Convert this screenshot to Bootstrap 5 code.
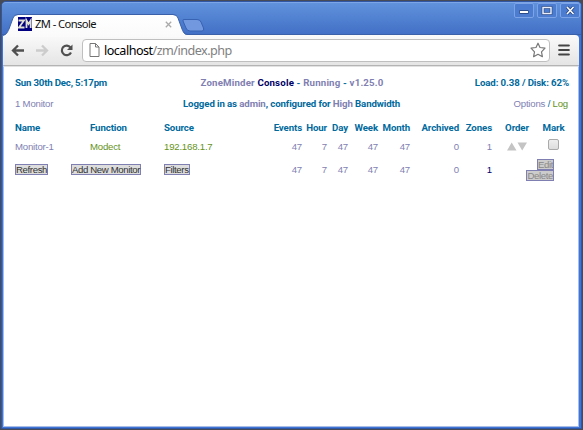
<!DOCTYPE html>
<html lang="en">
<head>
<meta charset="utf-8">
<title>ZM - Console</title>
<link href="https://cdn.jsdelivr.net/npm/bootstrap@5.3.0/dist/css/bootstrap.min.css" rel="stylesheet">
<style>
body{width:583px;height:430px;background:#474b55;font-family:"Liberation Sans",Arial,sans-serif}
.window{width:581px;height:428px;margin:1px 0 0 1px;border:1px solid #2f57a6;border-radius:5px 5px 0 0;background:#3e75d6;padding:0 2px 2px 1px}
.titlebar{height:33px;margin:0 -2px 0 -1px;border-radius:4px 4px 0 0;border-top:1px solid #7ba5e6;border-bottom:1px solid #3960a9;background:linear-gradient(#6092dc,#4270c6)}
.tabshape{left:0;top:0}
.tabtext{left:18px;top:14px;width:162px;height:20px;font:11.200px/20px "Noto Sans",sans-serif;color:#111}
.favicon{width:14px;height:14px;background:#000080}
.tabtitle{margin-left:3px;letter-spacing:-.58px}
.winbtns{padding:0 1px 0 0;gap:3px}
.winbtn{width:20px;height:15px;border:1px solid #7da3e7;background:#4b7ccf;border-radius:2px}
.toolbar{height:31px;background:linear-gradient(#fafafa,#e5e5e5);border-bottom:1px solid #b4b4b4;padding:0 5px 0 8px;border-radius:0 4px 0 0}
.forward{margin:0 11px 0 12px}
.omnibox{width:468px;height:23px;background:#fff;border:1px solid #bfbfbf;border-radius:4px;padding:0 3px 0 6px;margin-left:9px;font:12.600px/21px "Noto Sans",sans-serif;color:#808080;letter-spacing:-.52px}
.omnibox b{font-weight:400;color:#000}
.urltext{margin-left:4px;padding-top:1px}
.page{height:361px;background:#fff;border:1px solid #a9bde5;border-top:1px solid #e2e2e2;padding:2px 10px 0 11px;font-size:9.600px;line-height:12px;color:#016a9d;letter-spacing:-.2px}
.info{display:grid;grid-template-columns:1fr auto 1fr;width:554px}
.info.fw-bold,.info .fw-bold,.console th{font-family:Roboto,"Liberation Sans",sans-serif;font-size:9.700px;letter-spacing:-.12px}
.info .headline{letter-spacing:.17px}
.info .stamp{letter-spacing:-.2px}
.subinfo{padding-top:9px;width:553px}
.console{width:550px;table-layout:fixed;border-collapse:collapse;margin-top:12px}
.console th,.console td{padding:0;white-space:nowrap;text-align:right}
.console .start{text-align:left}
.console .mid{text-align:center}
.console td{color:#7f7fb2}
.visited{color:#7f7fb2}
.green{color:#65931b !important}
.console .navy,.navy{color:#000066}
.chip{display:inline-block;height:11px;line-height:9px;border:1px solid #7f7fb2;background:#ddd;color:#333;letter-spacing:-.36px}
.chip.off{color:#888;background:#ccc}
.addnew{margin-left:-19px}
.edits{margin:0 11px 0 0;line-height:9px}
.tick{display:inline-block;width:11px;height:11px;border:1px solid #aaa;border-radius:2px;background:linear-gradient(#eee,#ddd);vertical-align:top;margin-top:-2px}
svg{display:block;flex:none}
</style>
<script src="https://cdn.jsdelivr.net/npm/bootstrap@5.3.0/dist/js/bootstrap.bundle.min.js"></script>
</head>
<body class="m-0 overflow-hidden">
<svg class="tabshape position-absolute z-1" width="220" height="38" aria-hidden="true">
<defs><linearGradient id="tab" x2="0" y2="1"><stop stop-color="#fff"/><stop offset="1" stop-color="#fafafa"/></linearGradient></defs>
<path d="M3 36C7 34 7 33 9 29L13 18Q14 15 18 15H173Q177 15 178 18L182 29C184 34 185 35 189 35V37H3Z" fill="url(#tab)"/>
<path d="M3 35.500C7 34 7 33 9 29L13 18Q14 14.500 18 14.500H173Q177 14.500 178 18L182 29C184 34 185 34.500 189 34.500H220" fill="none" stroke="#3960a9"/>
<path d="M184 19.500H197Q200 19.500 201 22L203.500 28Q204.500 31 202 31H190Q187 31 186 28L183 21Q182.500 19.500 184 19.500Z" fill="#7299df" stroke="#3862b2"/>
</svg>
<div class="tabtext position-absolute z-2 d-flex align-items-center">
<svg class="favicon" viewBox="0 0 14 14"><path d="M.5 3.500H6L1 10.500H6.500M8.500 11V3.500L10.500 7L12.700 3.500V11" fill="none" stroke="#e0e0d0" stroke-width="1.800"/></svg>
<span class="tabtitle">ZM - Console</span>
<svg class="ms-auto me-2" width="7" height="7"><path d="M.8 .8L6.200 6.200M6.200 .8L.8 6.200" stroke="#aaa" stroke-width="1.300"/></svg>
</div>
<main class="window">
<header class="titlebar">
<div class="winbtns d-flex justify-content-end">
<span class="winbtn"><svg width="18" height="13"><path d="M4.500 8H13.500" stroke="#243f77" stroke-width="3.600"/><path d="M5 8H13" stroke="#fff" stroke-width="2"/></svg></span>
<span class="winbtn"><svg width="18" height="13"><rect x="5" y="3.500" width="8" height="6" fill="none" stroke="#243f77" stroke-width="2.600"/><rect x="5" y="3.500" width="8" height="6" fill="none" stroke="#e9effb" stroke-width="1.500"/></svg></span>
<span class="winbtn"><svg width="18" height="13"><path d="M6 3L12.500 10M12.500 3L6 10" stroke="#243f77" stroke-width="3"/><path d="M6 3L12.500 10M12.500 3L6 10" stroke="#fff" stroke-width="1.600"/></svg></span>
</div>
</header>
<nav class="toolbar d-flex align-items-center">
<svg width="13" height="13"><path d="M7 1.500L2 6.500L7 11.500M2 6.500H13" fill="none" stroke="#505050" stroke-width="2.300"/></svg>
<svg class="forward" width="13" height="13"><path d="M6 1.500L11 6.500L6 11.500M11 6.500H0" fill="none" stroke="#ccc" stroke-width="2.300"/></svg>
<svg width="13" height="13"><path d="M10.500 3.500A4.800 4.800 0 1 0 11 8.500" fill="none" stroke="#505050" stroke-width="2.200"/><path d="M12.500 .5V6H7Z" fill="#505050"/></svg>
<div class="omnibox d-flex align-items-center">
<svg width="11" height="14"><path d="M1 .5H6.500L10 4V13.500H1ZM6.500 .5V4H10" fill="#fff" stroke="#777"/></svg>
<span class="urltext"><b>localhost</b>/zm/index.php</span>
<svg class="ms-auto" width="16" height="16"><path d="M8 1.200L10 5.500L15 6.200L11.500 9.800L12.400 14.700L8 12.300L3.600 14.700L4.500 9.800L1 6.200L6 5.500Z" fill="#fff" stroke="#777" stroke-width="1.200" stroke-linejoin="round"/></svg>
</div>
<svg class="ms-auto me-1" width="12" height="12"><path d="M1.200 1.500H10.800M1.200 6H10.800M1.200 10.500H10.800" stroke="#444" stroke-width="2.200" stroke-linecap="round"/></svg>
</nav>
<section class="page">
<div class="info fw-bold pt-2"><span class="stamp">Sun 30th Dec, 5:17pm</span><span class="headline"><span class="visited">ZoneMinder</span> <span class="navy">Console</span> - <span class="visited">Running</span> - <span class="visited">v1.25.0</span></span><span class="text-end">Load: 0.38 / Disk: 62%</span></div>
<div class="info subinfo"><span class="visited">1 Monitor</span><span class="fw-bold">Logged in as <span class="visited">admin</span>, configured for <span class="visited">High</span> Bandwidth</span><span class="text-end"><span class="visited">Options</span> / <span class="green">Log</span></span></div>
<table class="console">
<colgroup><col style="width:75px"><col style="width:74px"><col style="width:98px"><col style="width:40px"><col style="width:25px"><col style="width:21px"><col style="width:30px"><col style="width:32px"><col style="width:49px"><col style="width:33px"><col style="width:50px"><col style="width:23px"></colgroup>
<thead><tr><th class="start">Name</th><th class="start">Function</th><th class="start">Source</th><th>Events</th><th>Hour</th><th>Day</th><th>Week</th><th>Month</th><th>Archived</th><th>Zones</th><th class="mid">Order</th><th class="mid">Mark</th></tr></thead>
<tbody>
<tr style="height:25px"><td class="start">Monitor-1</td><td class="start green">Modect</td><td class="start green">192.168.1.7</td><td>47</td><td>7</td><td>47</td><td>47</td><td>47</td><td>0</td><td>1</td><td class="mid"><svg class="mx-auto" width="20" height="9"><path d="M0 8.500L4.700 .5L9.500 8.500ZM10.500 .5H20L15.200 8.500Z" fill="#c4c4c4"/></svg></td><td class="mid"><span class="tick"></span></td></tr>
<tr><td class="start"><span class="chip">Refresh</span></td><td class="start"><span class="chip addnew">Add New Monitor</span></td><td class="start"><span class="chip">Filters</span></td><td>47</td><td>7</td><td>47</td><td>47</td><td>47</td><td>0</td><td class="navy">1</td><td colspan="2"><div class="d-flex flex-column align-items-end edits"><span class="chip off">Edit</span><span class="chip off">Delete</span></div></td></tr>
</tbody></table>
</section>
</main>
</body>
</html>
